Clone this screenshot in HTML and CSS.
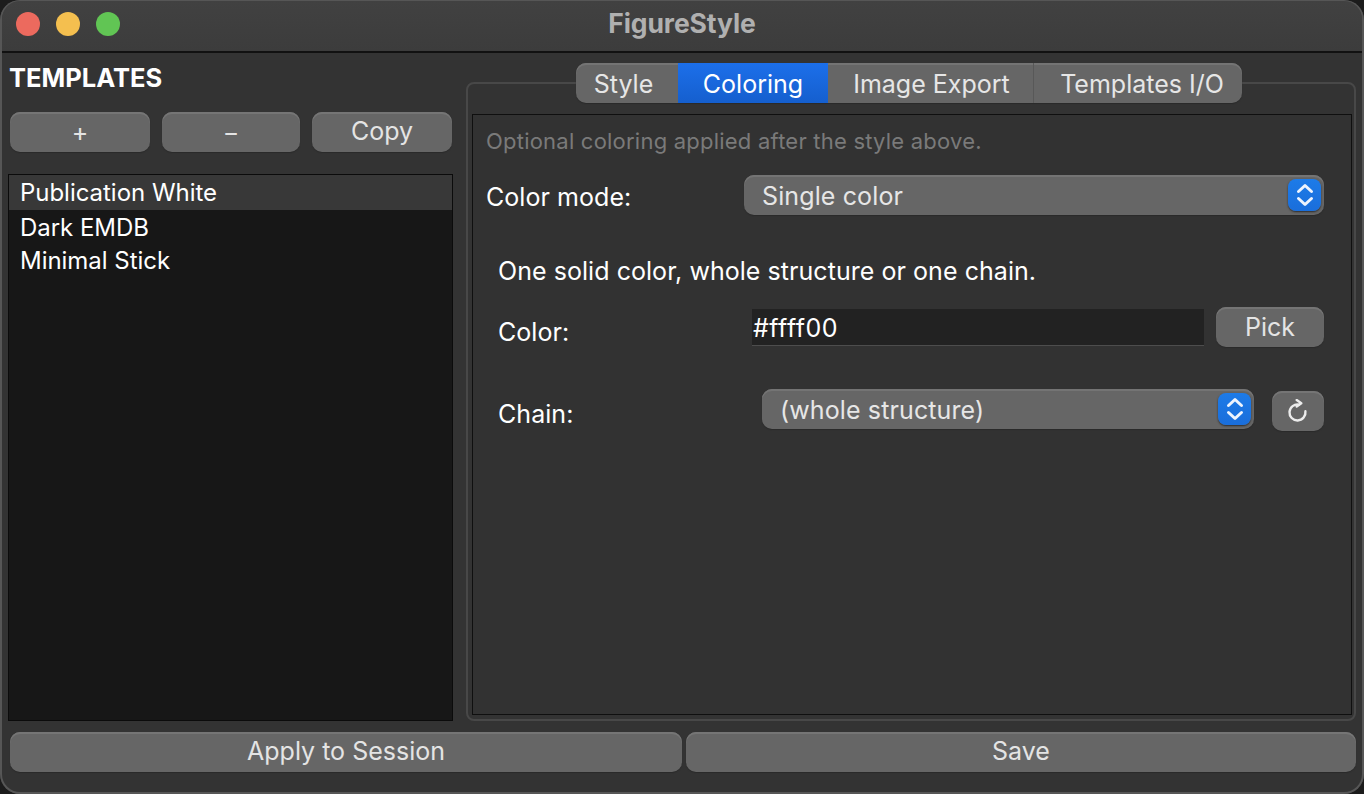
FILE: index.html
```html
<!DOCTYPE html>
<html lang="en">
<head>
<meta charset="utf-8">
<title>FigureStyle</title>
<link rel="stylesheet" href="styles.css">
</head>
<body>
<div class="window">
  <header class="titlebar">
    <div class="lights">
      <span class="light red"></span>
      <span class="light yellow"></span>
      <span class="light green"></span>
    </div>
    <div class="title">FigureStyle</div>
  </header>
  <main class="content">
    <section class="sidebar">
      <h1 class="heading">TEMPLATES</h1>
      <div class="side-buttons">
        <button class="btn add">+</button>
        <button class="btn remove">−</button>
        <button class="btn copy">Copy</button>
      </div>
      <ul class="list">
        <li class="item selected">Publication White</li>
        <li class="item">Dark EMDB</li>
        <li class="item">Minimal Stick</li>
      </ul>
    </section>
    <section class="tabs-area">
      <nav class="tabs">
        <div class="tab tab-style">Style</div>
        <div class="tab tab-coloring active">Coloring</div>
        <div class="tab tab-export">Image Export</div>
        <div class="tab tab-io">Templates I/O</div>
      </nav>
      <div class="group">
        <div class="page">
          <p class="hint">Optional coloring applied after the style above.</p>
          <div class="mode-row">
            <span class="label mode-label">Color mode:</span>
            <div class="select mode-select">
              <span class="select-text">Single color</span>
              <span class="stepper">
                <svg viewBox="0 0 32 32" width="32" height="32"><path d="M9.5 12.5 16 6.5l6.5 6M9.5 19.5 16 25.5l6.5-6" fill="none" stroke="#eef4fd" stroke-width="3" stroke-linecap="round" stroke-linejoin="round"/></svg>
              </span>
            </div>
          </div>
          <div class="sub">
            <p class="desc">One solid color, whole structure or one chain.</p>
            <div class="color-row">
              <span class="label color-label">Color:</span>
              <div class="field">#ffff00</div>
              <button class="btn pick">Pick</button>
            </div>
            <div class="chain-row">
              <span class="label chain-label">Chain:</span>
              <div class="select chain-select">
                <span class="select-text">(whole structure)</span>
                <span class="stepper">
                  <svg viewBox="0 0 32 32" width="32" height="32"><path d="M9.5 12.5 16 6.5l6.5 6M9.5 19.5 16 25.5l6.5-6" fill="none" stroke="#eef4fd" stroke-width="3" stroke-linecap="round" stroke-linejoin="round"/></svg>
                </span>
              </div>
              <button class="btn reload" aria-label="Refresh">
                <svg viewBox="0 0 24 24" width="24" height="24"><path d="M13 5.6A8 8 0 1 0 19.4 12.3" fill="none" stroke="#ececec" stroke-width="2.4" stroke-linecap="round"/><path d="M10.7 1 15.3 4.3 10.7 7.6" fill="none" stroke="#ececec" stroke-width="2.4" stroke-linecap="round" stroke-linejoin="round"/></svg>
              </button>
            </div>
          </div>
        </div>
      </div>
    </section>
  </main>
  <footer class="footer">
    <button class="btn apply">Apply to Session</button>
    <button class="btn save">Save</button>
  </footer>
</div>
</body>
</html>
```
FILE: styles.css
```css
* { box-sizing: border-box; }
html, body { margin: 0; padding: 0; background: #1c1c1c; }
body { width: 1364px; height: 794px; overflow: hidden; font-family: Inter, "Liberation Sans", sans-serif; }

.window {
  width: 1364px; height: 794px;
  display: flex; flex-direction: column;
  background: #333333;
  border-radius: 20px;
  overflow: hidden;
  box-shadow: inset 0 0 0 2px #565656;
  color: #fff;
}
.titlebar {
  height: 52px; flex: none;
  position: relative;
  display: flex; align-items: center; justify-content: center;
  background: linear-gradient(#414141, #3c3c3c);
  border-bottom: 2px solid #111;
  margin: 1px 2px 0;
  padding-bottom: 6px;
  border-radius: 18px 18px 0 0;
}
.lights { position: absolute; left: 14px; top: 11px; display: flex; gap: 16px; }
.light { width: 24px; height: 24px; border-radius: 50%; display: block; }
.red { background: #ec6a5e; }
.yellow { background: #f4bf4f; }
.green { background: #61c554; }
.title { font-size: 26.5px; font-weight: 700; color: #b0b0b0; letter-spacing: -0.1px; }

.content { flex: 1; min-height: 0; display: flex; padding: 0 8px 0 8px; gap: 13px; }
.sidebar { width: 445px; flex: none; display: flex; flex-direction: column; }
.heading { margin: 9px 0 0 1px; font-size: 25.5px; line-height: 32px; font-weight: 700; color: #fff; letter-spacing: 0; }
.side-buttons { display: flex; gap: 12px; margin: 18px 1px 0 2px; }

.btn {
  height: 40px; padding: 0; border: 0;
  font: 400 25px/1 Inter, "Liberation Sans", sans-serif;
  letter-spacing: 0;
  color: #e4e4e4;
  background: #666666;
  border-radius: 10px;
  box-shadow: inset 0 2px 0 #757575, 0 1px 1px #2a2a2a;
  display: flex; align-items: center; justify-content: center;
}
.add { width: 140px; }
.remove { width: 138px; }
.copy { width: 140px; padding-bottom: 1px; }

.list {
  list-style: none; margin: 22px 0 0 0; padding: 0;
  height: 547px;
  background: #171717;
  border: 1px solid #0b0b0b;
}
.item { height: 34px; padding-left: 11px; font-size: 24px; line-height: 35px; color: #fff; letter-spacing: -0.03px; }
.item:last-child { line-height: 33px; }
.selected { height: 35px; background: #383838; }

.tabs-area { flex: 1; min-width: 0; position: relative; display: flex; flex-direction: column; }
.tabs {
  position: absolute; left: 110px; top: 10px; z-index: 1;
  display: flex; height: 40px;
  background: #666666;
  border-radius: 10px;
  box-shadow: inset 0 2px 0 #747474, 0 1px 1px #2a2a2a;
  overflow: hidden;
}
.tab {
  font-size: 25px; line-height: 42px; text-align: center; color: #e6e6e6; letter-spacing: 0;
  border-right: 1px solid #585858;
}
.tab-style { width: 102px; border-right: 0; padding-right: 7px; }
.tab-coloring { width: 150px; border-right: 0; }
.tab-export { width: 206px; padding-left: 2px; }
.tab-io { width: 208px; border-right: 0; padding-left: 8px; }
.active { color: #fff; background: linear-gradient(#1c6fea, #155fce); }

.group {
  margin-top: 29px;
  height: 639px;
  width: 890px;
  border: 2px solid #484848;
  border-radius: 8px;
  padding: 30px 4px 4px 4px;
}
.page { height: 601px; width: 880px; border: 1px solid #0f0f0f; background: #323232; padding: 0 0 0 13px; }
.hint { margin: 12px 0 0; font-size: 22px; line-height: 28px; color: #7a7a7a; letter-spacing: 0.22px; }
.label { font-size: 25px; line-height: 40px; color: #fff; letter-spacing: 0.05px; display: block; }

.select {
  height: 40px;
  display: flex; align-items: center; justify-content: space-between;
  background: #666666;
  border-radius: 10px;
  box-shadow: inset 0 2px 0 #747474, 0 1px 1px #2a2a2a;
  font-size: 25px; color: #e6e6e6; letter-spacing: 0.12px;
  padding: 0 3px 0 18px;
}
.select-text { margin-top: 2px; }
.stepper {
  width: 33px; height: 32px; flex: none;
  border-radius: 8px;
  background: linear-gradient(#1d7be8, #1a6edb);
  box-shadow: 0 1px 2px #2a2a2a;
  display: flex; align-items: center; justify-content: center;
}
.mode-row { display: flex; align-items: flex-start; margin-top: 20px; }
.mode-label { width: 258px; margin-top: 2px; }
.mode-select { width: 580px; }

.sub { padding-left: 12px; }
.desc { margin: 39px 0 0; font-size: 25px; line-height: 30px; color: #fff; letter-spacing: 0.05px; }
.color-row { display: flex; align-items: flex-start; margin-top: 21px; }
.color-label { width: 254px; margin-top: 5px; }
.field {
  width: 452px; height: 37px; margin-top: 2px;
  background: #222222;
  border-bottom: 1px solid #4d4d4d;
  font-size: 25px; line-height: 39px; color: #fff; padding-left: 1px; letter-spacing: 0.5px;
}
.pick { width: 108px; margin-left: 12px; }
.chain-row { display: flex; align-items: flex-start; margin-top: 37px; }
.chain-label { width: 264px; margin-top: 5px; }
.chain-select { width: 492px; }
.reload { width: 52px; margin-left: 18px; margin-top: 2px; }

.footer { height: 62px; flex: none; display: flex; gap: 4px; padding: 0 8px 0 10px; }
.apply { width: 672px; padding-bottom: 2px; }
.save { width: 670px; padding-bottom: 2px; }
```
